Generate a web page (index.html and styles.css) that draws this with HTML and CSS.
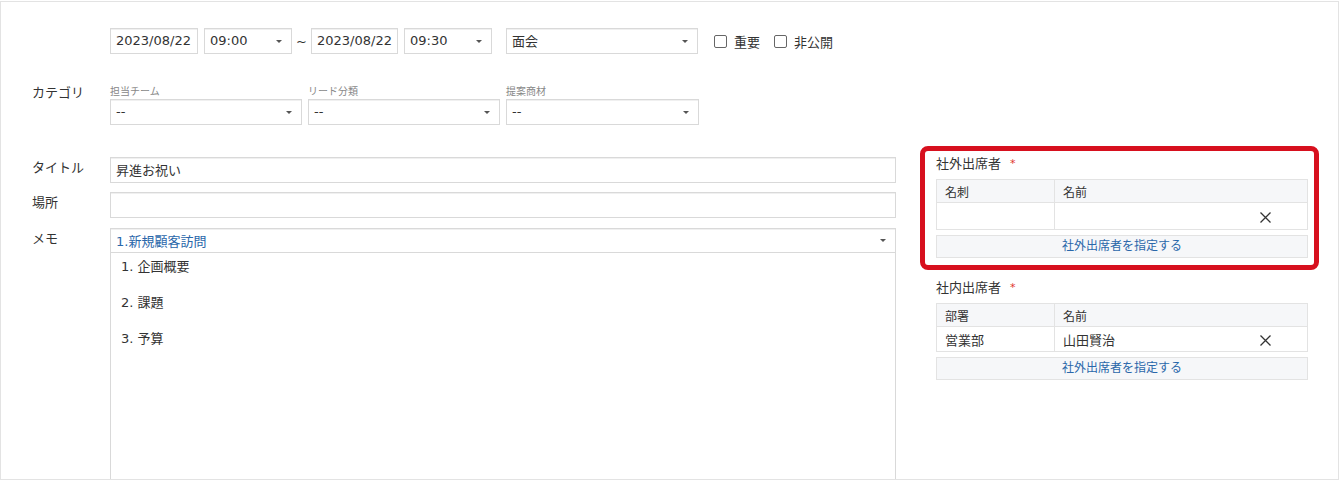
FILE: index.html
```html
<!DOCTYPE html>
<html lang="ja">
<head>
<meta charset="utf-8">
<link rel="stylesheet" href="styles.css">
</head>
<body>
<div class="frame">
  <div class="top">
    <div class="row1">
      <div class="box w-date">2023/08/22</div>
      <div class="box w-time sel"><span>09:00</span><i class="arrow"></i></div>
      <div class="tilde">~</div>
      <div class="box w-date2">2023/08/22</div>
      <div class="box w-time sel"><span>09:30</span><i class="arrow"></i></div>
      <div class="box w-type sel"><span>面会</span><i class="arrow"></i></div>
      <label class="check"><span class="cb"></span>重要</label>
      <label class="check"><span class="cb"></span>非公開</label>
    </div>
    <div class="catrow">
      <div class="label">カテゴリ</div>
      <div class="cats">
        <div class="cat">
          <div class="sublabel">担当チーム</div>
          <div class="box sel"><span>--</span><i class="arrow"></i></div>
        </div>
        <div class="cat">
          <div class="sublabel">リード分類</div>
          <div class="box sel"><span>--</span><i class="arrow"></i></div>
        </div>
        <div class="cat">
          <div class="sublabel">提案商材</div>
          <div class="box sel"><span>--</span><i class="arrow"></i></div>
        </div>
      </div>
    </div>
  </div>
  <div class="content">
    <div class="main">
      <div class="frow">
        <div class="label">タイトル</div>
        <div class="box field">昇進お祝い</div>
      </div>
      <div class="frow r-place">
        <div class="label">場所</div>
        <div class="box field"></div>
      </div>
      <div class="frow r-memo">
        <div class="label">メモ</div>
        <div class="memo">
          <div class="box sel memosel"><span class="blue">1.新規顧客訪問</span><i class="arrow"></i></div>
          <div class="memobody">
            <p>1. 企画概要</p>
            <p>2. 課題</p>
            <p>3. 予算</p>
          </div>
        </div>
      </div>
    </div>
    <div class="side">
      <div class="group highlight">
        <div class="glabel">社外出席者<span class="req">*</span></div>
        <table class="tbl">
          <tr class="head"><th class="c1">名刺</th><th>名前</th></tr>
          <tr class="body"><td class="c1"></td><td><div class="namecell"><span></span><svg class="x" width="11" height="11" viewBox="0 0 11 11"><path d="M0.5 0.5 L10.5 10.5 M10.5 0.5 L0.5 10.5" stroke="#333" stroke-width="1.3" fill="none"/></svg></div></td></tr>
        </table>
        <div class="btn">社外出席者を指定する</div>
      </div>
      <div class="group g2">
        <div class="glabel">社内出席者<span class="req">*</span></div>
        <table class="tbl">
          <tr class="head"><th class="c1">部署</th><th>名前</th></tr>
          <tr class="body b2"><td class="c1">営業部</td><td><div class="namecell"><span>山田賢治</span><svg class="x" width="11" height="11" viewBox="0 0 11 11"><path d="M0.5 0.5 L10.5 10.5 M10.5 0.5 L0.5 10.5" stroke="#333" stroke-width="1.3" fill="none"/></svg></div></td></tr>
        </table>
        <div class="btn">社外出席者を指定する</div>
      </div>
    </div>
  </div>
</div>
</body>
</html>
```

FILE: styles.css
```css
* { box-sizing: border-box; }
html, body { margin: 0; padding: 0; background: #fff; }
body {
  font-family: "DejaVu Sans", "Noto Sans CJK JP", sans-serif;
  font-size: 13px;
  color: #333;
}
.frame {
  margin-top: 1px;
  width: 1339px;
  height: 479px;
  border: 1px solid #e3e3e3;
  overflow: hidden;
}
.top { padding-top: 26px; }
.row1 {
  display: flex;
  align-items: center;
  padding-left: 109px;
  height: 26px;
}
.box {
  height: 26px;
  border: 1px solid #d9d9d9;
  box-shadow: inset 0 1px 0 #f0f0f0;
  background: #fff;
  padding: 0 5px 1px;
  display: flex;
  align-items: center;
  white-space: nowrap;
}
.sel { justify-content: space-between; padding-right: 9px; }
.arrow {
  width: 0; height: 0;
  border-left: 3px solid transparent;
  border-right: 3px solid transparent;
  border-top: 3px solid #555;
  margin-top: 1px;
}
.w-date { width: 88px; }
.w-date2 { width: 87px; }
.w-time { width: 88px; margin-left: 6px; }
.tilde { width: 19px; text-align: center; font-size: 13px; }
.w-type { width: 192px; margin-left: 14px; }
.check {
  display: flex;
  align-items: center;
  margin-left: 16px;
  font-size: 13px;
}
.check + .check { margin-left: 14px; }
.cb {
  width: 13px; height: 13px;
  border: 1px solid #666;
  border-radius: 2px;
  margin-right: 7px;
}
.catrow {
  display: flex;
  margin-top: 30px;
  padding-left: 31px;
}
.label { width: 78px; line-height: 18px; }
.cats { display: flex; gap: 6px; }
.cat { width: 192px; }
.cat:last-child { width: 193px; }
.sublabel {
  font-size: 10px;
  color: #888;
  line-height: 13px;
  padding-top: 1px;
  height: 15px;
}
.content {
  display: flex;
  margin-top: 30px;
  padding-left: 31px;
}
.main { width: 864px; padding-top: 2px; }
.frow { display: flex; }
.frow .label { line-height: 22px; }
.field { flex: 1; height: 26px; }
.r-place { margin-top: 9px; }
.r-memo { margin-top: 10px; }
.memo { flex: 1; }
.memosel { height: 25px; }
.blue { color: #2a67aa; }
.memobody {
  height: 240px;
  border: 1px solid #d9d9d9;
  border-top: none;
  padding: 5px 10px;
}
.memobody p { margin: 0 0 18px; line-height: 18px; }
.side { margin-left: 40px; width: 372px; }
.group { position: relative; }
.highlight::after {
  content: "";
  position: absolute;
  left: -16px; top: -9px; right: -11px; bottom: -12px;
  border: 5px solid #d7101e;
  border-radius: 8px;
  pointer-events: none;
}
.g2 { margin-top: 21px; }
.glabel { line-height: 18px; margin-bottom: 6px; }
.req { color: #e0342c; font-size: 11px; margin-left: 9px; vertical-align: 1px; }
.tbl {
  width: 100%;
  border-collapse: collapse;
  font-size: 12px;
}
.tbl th, .tbl td {
  border: 1px solid #e3e3e3;
  padding: 0 8px;
  text-align: left;
  font-weight: normal;
}
.tbl .c1 { width: 118px; }
.head th { background: #f6f7f9; height: 23px; }
.body td { height: 27px; font-size: 13px; }
.b2 td { height: 25px; }
.namecell { display: flex; align-items: center; justify-content: space-between; padding-right: 28px; }
.x { display: block; margin-top: 2px; }
.btn {
  margin-top: 5px;
  height: 23px;
  border: 1px solid #e3e3e3;
  background: #f6f7f9;
  color: #2a67aa;
  font-size: 12px;
  text-align: center;
  line-height: 21px;
}
```
